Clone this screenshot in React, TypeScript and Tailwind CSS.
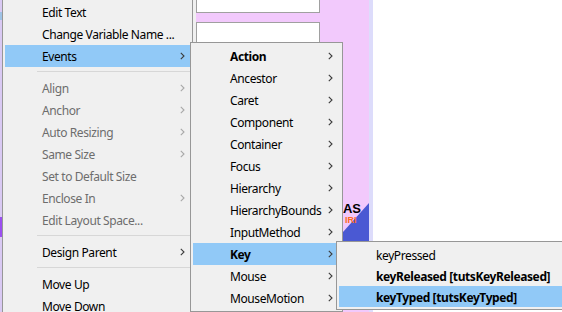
import clsx from "clsx";

type Entry =
  | { sep: true }
  | { sep?: false; label: string; bold?: boolean; off?: boolean; arrow?: boolean; active?: boolean };

const mainMenu: Entry[] = [
  { label: "Edit Text" },
  { label: "Change Variable Name ..." },
  { label: "Events", arrow: true, active: true },
  { sep: true },
  { label: "Align", off: true, arrow: true },
  { label: "Anchor", off: true, arrow: true },
  { label: "Auto Resizing", off: true, arrow: true },
  { label: "Same Size", off: true, arrow: true },
  { label: "Set to Default Size", off: true },
  { label: "Enclose In", off: true, arrow: true },
  { label: "Edit Layout Space...", off: true },
  { sep: true },
  { label: "Design Parent", arrow: true },
  { sep: true },
  { label: "Move Up" },
  { label: "Move Down" },
];

const eventsMenu: Entry[] = [
  { label: "Action", bold: true, arrow: true },
  { label: "Ancestor", arrow: true },
  { label: "Caret", arrow: true },
  { label: "Component", arrow: true },
  { label: "Container", arrow: true },
  { label: "Focus", arrow: true },
  { label: "Hierarchy", arrow: true },
  { label: "HierarchyBounds", arrow: true },
  { label: "InputMethod", arrow: true },
  { label: "Key", bold: true, arrow: true, active: true },
  { label: "Mouse", arrow: true },
  { label: "MouseMotion", arrow: true },
];

const keyMenu: Entry[] = [
  { label: "keyPressed" },
  { label: "keyReleased [tutsKeyReleased]", bold: true },
  { label: "keyTyped [tutsKeyTyped]", bold: true, active: true },
];

function Chevron({ off }: { off?: boolean }) {
  return (
    <svg width="5" height="8" viewBox="0 0 5 8" className="shrink-0">
      <polyline
        points="0.8,0.8 4,4 0.8,7.2"
        fill="none"
        stroke={off ? "#a8a8a8" : "#3c3c3c"}
        strokeWidth="1.1"
      />
    </svg>
  );
}

function MenuList({ items, rowH, pr }: { items: Entry[]; rowH: string; pr: string }) {
  return (
    <>
      {items.map((it, i) =>
        it.sep ? (
          <div key={i} className="h-[10px] pt-[4px] pl-[32px]">
            <div className="h-px bg-[#d7d7d7]" />
          </div>
        ) : (
          <div
            key={i}
            className={clsx(
              "flex items-center justify-between pl-[37px] whitespace-nowrap",
              rowH,
              pr,
              it.active && "bg-[#91c9f7]",
              it.bold && "font-bold",
              it.off ? "text-[#6d6d6d]" : "text-black"
            )}
          >
            <span className="pt-[2px] tracking-[-0.4px]">{it.label}</span>
            {it.arrow && <Chevron off={it.off} />}
          </div>
        )
      )}
    </>
  );
}

export default function App() {
  return (
    <div className="relative w-[562px] h-[312px] overflow-hidden bg-white font-['Noto_Sans',sans-serif] text-[12px] leading-none">
      {/* background window behind the popups */}
      <div className="flex h-full">
        <div className="w-[2px] flex flex-col bg-[#d9c9f3]">
          <div className="h-[12px]" />
          <div className="h-[8px] bg-[#9fc3e6]" />
          <div className="h-[197px]" />
          <div className="h-[20px] bg-[#9b4ff0]" />
          <div className="flex-1" />
        </div>
        <div className="w-[194px] bg-[#f0f0f0]" />
        <div className="w-[124px] flex flex-col bg-[#f2c9fc]">
          <div className="h-[13px] bg-white border-x border-b border-[#a0a0a0]" />
          <div className="h-[9px]" />
          <div className="flex-1 bg-white border border-[#a0a0a0]" />
        </div>
        <div className="w-[49px] bg-[#f2c9fc] pt-[196px] pl-[23px]">
          <div className="relative w-[26px] h-[48px]">
            <svg width="26" height="48" viewBox="0 0 26 48" className="absolute left-0 top-0">
              <polygon points="0,36 26,7 26,48 0,48" fill="#4a59d3" />
            </svg>
            <span className="absolute left-0 top-[7px] font-['Liberation_Sans',sans-serif] font-bold text-[13px] leading-[12px] text-black tracking-[-0.2px]">
              AS
            </span>
            <span className="absolute left-[2px] top-[20px] font-['Liberation_Sans',sans-serif] font-bold text-[9px] leading-[9px] text-[#ff6a1c]">
              IRI
            </span>
          </div>
        </div>
        <div className="w-[4px] bg-[#dddcfb]" />
        <div className="flex-1 bg-white" />
      </div>

      {/* context menu */}
      <div className="absolute left-[2px] top-[-2px] w-[191px] bg-[#f0f0f0] border border-[#979797] px-[2px] py-[2px]">
        <MenuList items={mainMenu} rowH="h-[22px]" pr="pr-[5px]" />
      </div>

      {/* Events submenu */}
      <div className="absolute left-[190px] top-[42px] w-[153px] bg-[#f0f0f0] border border-[#979797] px-[2px] py-[2px]">
        <MenuList items={eventsMenu} rowH="h-[22px]" pr="pr-[7px]" />
      </div>

      {/* Key submenu */}
      <div className="absolute left-[336px] top-[241px] w-[250px] bg-[#f0f0f0] border border-[#979797] px-[2px] py-[2px]">
        <MenuList items={keyMenu} rowH="h-[21px]" pr="pr-[7px]" />
      </div>
    </div>
  );
}
